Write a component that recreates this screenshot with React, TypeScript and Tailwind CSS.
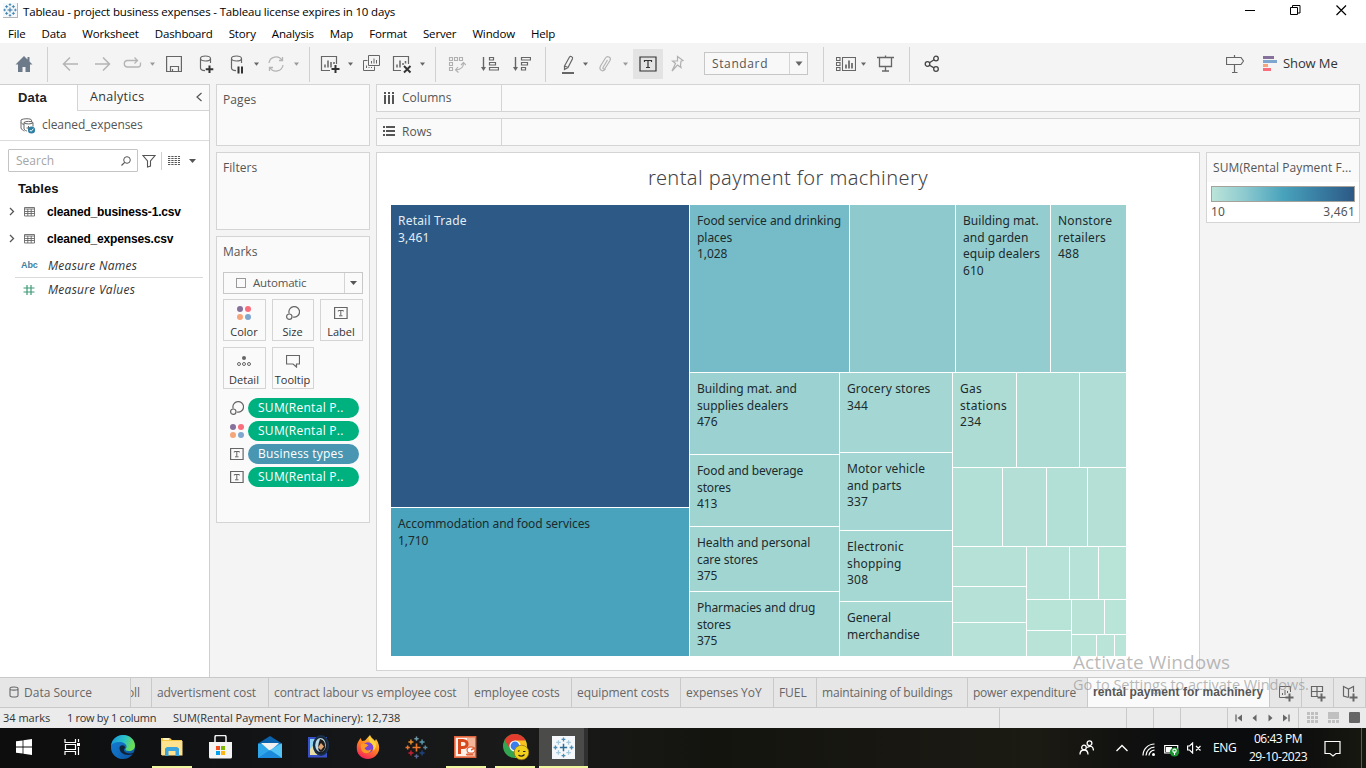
import React from "react";

type IconProps = { w: number; h?: number; className?: string; children: React.ReactNode };

const Icon = ({ w, h = 20, className = "", children }: IconProps) => (
  <svg
    width={w}
    height={h}
    viewBox={`0 0 ${w} ${h}`}
    fill="none"
    stroke="currentColor"
    className={`shrink-0 ${className}`}
  >
    {children}
  </svg>
);

const Caret = ({ className = "" }: { className?: string }) => (
  <Icon w={5} className={className}>
    <path d="M0 8.5h5L2.5 11.8z" fill="currentColor" stroke="none" />
  </Icon>
);

const Sep = ({ className = "" }: { className?: string }) => (
  <div className={`-mt-[7px] h-[35px] w-px shrink-0 bg-[#d0d0d0] ${className}`} />
);

const TableauMark = ({ size, colors }: { size: number; colors: string[] }) => {
  const pts: [number, number, number][] = [
    [12, 2.8, 2.2], [12, 21.2, 2.2], [2.8, 12, 2.2], [21.2, 12, 2.2],
    [6.2, 6.2, 2.6], [17.8, 6.2, 2.6], [6.2, 17.8, 2.6], [17.8, 17.8, 2.6],
  ];
  return (
    <svg width={size} height={size} viewBox="0 0 24 24" fill="none" strokeWidth="1.5" className="shrink-0">
      <path d="M12 7.8v8.4M7.8 12h8.4" stroke={colors[0]} strokeWidth="1.7" />
      {pts.map(([x, y, r], i) => (
        <path key={i} d={`M${x - r} ${y}h${2 * r}M${x} ${y - r}v${2 * r}`} stroke={colors[(i % (colors.length - 1)) + 1]} />
      ))}
    </svg>
  );
};

const menus: [string, string][] = [
  ["File", "ml-2"], ["Data", "ml-4"], ["Worksheet", "ml-4"], ["Dashboard", "ml-4"], ["Story", "ml-4"],
  ["Analysis", "ml-4"], ["Map", "ml-4"], ["Format", "ml-4"], ["Server", "ml-4"], ["Window", "ml-4"], ["Help", "ml-4"],
];

function TitleBar() {
  return (
    <div className="flex h-6 shrink-0 items-start bg-white text-black">
      <div className="ml-[3px] mt-[3px] flex h-[15px] w-[15px] items-center justify-center border-b border-r border-[#b5b5b5] bg-[#f4f8fb]">
        <TableauMark size={14} colors={["#2d6f9e", "#3a80ac"]} />
      </div>
      <div className="ml-[5px] mt-[3px] font-['Open_Sans'] text-[11.5px] leading-[18px] tracking-[-0.165px]">
        Tableau - project business expenses - Tableau license expires in 10 days
      </div>
      <div className="ml-auto flex">
        <Icon w={10} className="mr-[35px]"><path d="M0 10.5h10" /></Icon>
        <Icon w={11} className="mr-[35px]"><path d="M.5 7.5h7v7h-7zM2.5 7V5.500h7.500v7.500H8" /></Icon>
        <Icon w={11} className="mr-[19px]"><path d="M.5 5.500l9.500 9.500M10 5.500L.5 15" strokeWidth="1.2" /></Icon>
      </div>
    </div>
  );
}

function MenuBar() {
  return (
    <div className="flex h-[19px] shrink-0 bg-white font-['Open_Sans'] text-[11.5px] leading-[19px] tracking-[-0.15px] text-black">
      {menus.map(([m, c]) => (
        <span key={m} className={c}>{m}</span>
      ))}
    </div>
  );
}

const Cylinder = () => (
  <path d="M12.500 9V4.500c0-1.400-2-2.500-5-2.500s-5 1.100-5 2.500S4.500 7 7.500 7s5-1.100 5-2.500M2.500 4.500V14c0 1.500 2 2.500 4.500 2.700" strokeWidth="1.200" />
);

function Toolbar() {
  return (
    <div className="flex h-[41px] shrink-0 items-start bg-[#f4f4f4] pt-[11px] text-[#666]">
      <Icon w={18} className="ml-[15px] text-[#6c7a89]">
        <path d="M9 2L.5 10.500H3V18h4.500v-5h3v5H15v-7.500h2.500L14.500 7.500V3h-2v2.500z" fill="currentColor" stroke="none" />
      </Icon>
      <Sep className="ml-[14px]" />
      <Icon w={17} className="ml-[14px] text-[#b4b4b4]"><path d="M16 10H1.500M8 3.500L1.500 10 8 16.500" strokeWidth="1.5" /></Icon>
      <Icon w={17} className="ml-[15px] text-[#b4b4b4]"><path d="M1 10h14.500M9 3.500l6.500 6.500L9 16.500" strokeWidth="1.5" /></Icon>
      <Icon w={19} className="ml-3 text-[#b4b4b4]">
        <path d="M14 6.500H4A3.300 3.300 0 0 0 4 13h11c1.500 0 2.500-1 2.500-2.500V8.500M11.500 3.500l3 3-3 3" strokeWidth="1.3" />
      </Icon>
      <Caret className="ml-2 text-[#9a9a9a]" />
      <Icon w={16} className="ml-[11px]"><path d="M.6 2.500h14.800v15H.6zM4.500 17v-4.500h8V17M6.500 17v-2" strokeWidth="1.2" /></Icon>
      <Icon w={16} className="ml-4"><Cylinder /><path d="M11.500 11.500v7.500M7.700 15.300h7.600" stroke="#333" strokeWidth="2" /></Icon>
      <Icon w={15} className="ml-[15px]"><Cylinder /><path d="M9.500 12.500v7M13 12.500v7" stroke="#333" strokeWidth="2" /></Icon>
      <Caret className="ml-2.5" />
      <Icon w={18} className="ml-2 text-[#b4b4b4]">
        <path d="M2 9a7 7 0 0 1 13-2.500M16 11a7 7 0 0 1-13 2.500M12 6.500h3.500V3M6 13.500H2.500V17" strokeWidth="1.3" />
      </Icon>
      <Caret className="ml-[9px] text-[#9a9a9a]" />
      <Sep className="ml-2.5" />
      <Icon w={20} className="ml-2.5">
        <path d="M10 16.500H1.500v-14h15v7.500" strokeWidth="1.2" /><path d="M5 13.500v-3M8 13.500v-7M11 13.500V8M14 10V8" strokeWidth="1.5" />
        <path d="M15.500 11v8M11.500 15h8" stroke="#333" strokeWidth="2" />
      </Icon>
      <Caret className="ml-2" />
      <Icon w={19} className="ml-[9px]">
        <path d="M6.500 1.500h11v10h-11zM5.500 6.500h-4v10h11v-4M9.500 9.500V7M12 9.500V4.500M14.500 9.500V6M4.500 14v-2.500M7 14v-1M9.500 14v-1" />
      </Icon>
      <Icon w={20} className="ml-[11px]">
        <path d="M9 16.500H1.500v-14h15v7.500" strokeWidth="1.2" /><path d="M5 13.500v-3M8 13.500v-7M11 11V9M13.500 9.500V7" strokeWidth="1.5" />
        <path d="M12 12l6.500 6.500M18.500 12L12 18.500" stroke="#333" strokeWidth="1.900" />
      </Icon>
      <Caret className="ml-2" />
      <Sep className="ml-2.5" />
      <Icon w={18} className="ml-3 text-[#b0b0b0]">
        <path d="M1.500 3.500h3v3h-3zM6.500 3.500h3v3h-3zM11.500 3.500h3v3h-3zM1.500 8.500h3v3h-3zM1.500 13.500h3v3h-3zM15.500 9c0 4-2.500 6.500-7.500 7M13 11l2.500-2.500L18 11M10 13l-2.500 3 3 2.500" strokeWidth="1.100" />
      </Icon>
      <Icon w={18} className="ml-[15px]">
        <path d="M2.500 3v11" strokeWidth="1.400" /><path d="M0 13h5l-2.500 4z" fill="currentColor" stroke="none" />
        <path d="M8.500 3.500h4v2.500h-4zM8.500 8.500h6V11h-6zM8.500 13.500h9V16h-9z" strokeWidth="1.200" />
      </Icon>
      <Icon w={18} className="ml-[14px]">
        <path d="M2.500 3v11" strokeWidth="1.400" /><path d="M0 13h5l-2.500 4z" fill="currentColor" stroke="none" />
        <path d="M8.500 3.500h9V6h-9zM8.500 8.500h6V11h-6zM8.500 13.500h4V16h-4z" strokeWidth="1.200" />
      </Icon>
      <Sep className="ml-[14px]" />
      <Icon w={14} className="ml-[15px]">
        <path d="M3.500 12L8.500 3c1-1.300 3.800 0 3 1.700L7 13.500 3.500 15.500zM3.500 12L7 13.500" strokeWidth="1.200" /><path d="M1 19h12" strokeWidth="2" />
      </Icon>
      <Caret className="ml-2" />
      <Icon w={14} className="ml-2.5 text-[#b4b4b4]">
        <path d="M9.500 6L5 13.500c-.6 1.500 1.300 2.300 2 1L12 6.500c1.600-3.300-2.600-5.300-4.500-2.500L2.500 12c-2 4 2.500 6.500 5 3" strokeWidth="1.200" />
      </Icon>
      <Caret className="ml-[11px] text-[#9a9a9a]" />
      <div className="-mt-[5px] ml-[5px] flex h-[30px] w-[30px] shrink-0 items-center justify-center bg-[#e3e3e3] text-[#333]">
        <Icon w={18}><path d="M1 3h16v14H1z" strokeWidth="1.200" /><path d="M5.500 8V6.500h7V8M9 6.500v7M7 13.500h4" strokeWidth="1.200" /></Icon>
      </div>
      <Icon w={13} className="ml-2 text-[#b0b0b0]">
        <path d="M6.500 2.500l5.500 4-2 .8-.5 4 .5 2.200-3.500-2.500L1 17l3.500-7.500L1.500 7l5-.2z" strokeWidth="1.200" />
      </Icon>
      <div className="-mt-0.5 ml-5 flex h-[23px] w-[104px] shrink-0 border border-[#c6c6c6] bg-[#f8f8f8]">
        <div className="w-[84px] pl-[7px] font-['Open_Sans'] text-[12px] leading-[21px] tracking-[0.62px] text-[#555]">Standard</div>
        <div className="flex flex-1 items-center justify-center border-l border-[#d4d4d4]">
          <svg width="8" height="5"><path d="M.5 .5h7L4 5z" fill="#666" /></svg>
        </div>
      </div>
      <Sep className="ml-[15px]" />
      <Icon w={20} className="ml-3">
        <path d="M.5 3.500h3.500v3H.5zM.5 8.500h3.500v3H.5zM.5 13.500h3.500v3H.5zM6.500 3.500h13v13h-13z" strokeWidth="1.100" />
        <path d="M10 14.500v-4M13 14.500v-8M16 14.500V9" strokeWidth="1.700" />
      </Icon>
      <Caret className="ml-[5px]" />
      <Icon w={17} className="ml-[11px]">
        <path d="M0 3.500h17M2.500 4v8.500h12V4M8.500 12.500v4M5 17h7M8.500 1.500v2" strokeWidth="1.300" />
      </Icon>
      <Sep className="ml-[15px]" />
      <Icon w={16} className="ml-[14px] text-[#444]">
        <circle cx="3.500" cy="10" r="2.300" strokeWidth="1.300" /><circle cx="12" cy="4.500" r="2.300" strokeWidth="1.300" /><circle cx="12" cy="15" r="2.300" strokeWidth="1.300" />
        <path d="M5.500 8.800L10 5.800M5.500 11.200l4.500 2.700" strokeWidth="1.300" />
      </Icon>
      <Icon w={18} className="ml-[286px]">
        <path d="M.5 3.500h14.500l2.500 3.500-2.500 3.500H.5zM8.500 1v2.500M8.500 10.500v8M6 18.500h5.500" strokeWidth="1.200" />
      </Icon>
      <Icon w={14} className="ml-[19px]">
        <g stroke="none">
          <path d="M0 2h11v3H0z" fill="#85719b" /><path d="M0 6h14v3H0z" fill="#7ea6cf" />
          <path d="M0 10h5v3H0z" fill="#f6a57b" /><path d="M0 14h8v3H0z" fill="#fa6e7c" />
        </g>
      </Icon>
      <span className="ml-[6px] whitespace-nowrap font-['Open_Sans'] text-[13px] leading-[19px] tracking-[-0.1px] text-[#333]">Show Me</span>
    </div>
  );
}

const TableIcon = () => (
  <Icon w={11} h={11} className="ml-[9px] text-[#666]">
    <path d="M.5 1.500h10v8.500H.5zM.5 3h10M.5 5.500h10M.5 7.500h10M3.800 3v7M7.200 3v7" strokeWidth=".9" />
  </Icon>
);

function DataPane() {
  return (
    <div className="flex w-[210px] shrink-0 flex-col border-r border-t border-[#cfcfcf] bg-white">
      <div className="flex h-[26px] shrink-0">
        <div className="w-[77px] pl-[18px] font-['Liberation_Sans'] text-[13px] font-bold leading-[25px] tracking-[0.15px] text-[#222]">Data</div>
        <div className="flex flex-1 items-center border-b border-l border-[#d4d4d4] bg-[#fafafa] pl-3 font-['Open_Sans'] text-[12.5px] tracking-[0.33px] text-[#333]">
          Analytics
          <Icon w={6} h={10} className="ml-auto mr-[7px] -mt-0.5 text-[#555]"><path d="M5.500 1L1 5l4.500 4" strokeWidth="1.200" /></Icon>
        </div>
      </div>
      <div className="flex h-[30px] shrink-0 items-center border-b border-[#dcdcdc]">
        <Icon w={17} h={17} className="ml-[19px] text-[#666]">
          <path d="M12.500 5V3.200C12.500 1.300 4 1.300 2 3v8c.5 1.500 2 2.500 3.500 3M2 5.500C3 7 4.500 7.500 5 7.500M5 5.500c1.500-1.500 7.500-1.500 9 0v4M5 5.500v6.500c1 1.500 2 1.800 3 2M5 5.800c2 1.500 7 1.500 9 0M7.500 11H11M9.500 9v4.500" />
          <circle cx="12.500" cy="13" r="3.600" fill="#2e7fa3" stroke="none" /><path d="M10.800 13l1.300 1.300 2.300-2.600" stroke="#fff" />
        </Icon>
        <span className="-mt-px ml-1.5 font-['Open_Sans'] text-[12px] tracking-[-0.05px] text-[#555]">cleaned_expenses</span>
      </div>
      <div className="mt-2 flex h-[23px] shrink-0 items-center">
        <div className="ml-2 flex h-[23px] w-[130px] items-center rounded-[1px] border border-[#c4c4c4] pl-[7px] font-['Open_Sans'] text-[12px] text-[#a5a5a5]">
          <span>Search</span>
          <Icon w={10} h={10} className="ml-auto mr-1.5 text-[#555]"><circle cx="6" cy="4" r="3.300" /><path d="M3.700 6.300L.5 9.500" strokeWidth="1.200" /></Icon>
        </div>
        <Icon w={14} h={14} className="ml-1 text-[#555]"><path d="M1 1.500h12L8.500 7v5l-3 1V7z" strokeWidth="1.100" /></Icon>
        <div className="ml-[5px] h-[18px] w-px bg-[#d0d0d0]" />
        <Icon w={12} h={11} className="ml-1.5 text-[#555]">
          <path d="M0 1.500h12M0 3.500h12M0 5.500h12M0 7.500h12M0 9.500h12" strokeDasharray="2.300 1" />
        </Icon>
        <svg width="7" height="4" className="ml-[9px]"><path d="M0 0h7L3.500 4z" fill="#555" /></svg>
      </div>
      <div className="mt-[7px] h-[19px] shrink-0 pl-[18px] font-['Liberation_Sans'] text-[13px] font-bold leading-[20px] tracking-[0.05px] text-[#111]">Tables</div>
      {["cleaned_business-1.csv", "cleaned_expenses.csv"].map((t) => (
        <div key={t} className="flex h-[27px] shrink-0 items-center pl-[9px] font-['Liberation_Sans'] text-[12px] font-bold tracking-[-0.16px] text-black">
          <Icon w={6} h={9} className="text-[#555]"><path d="M1 1l3.500 3.500L1 8" strokeWidth="1.300" /></Icon>
          <TableIcon />
          <span className="ml-3">{t}</span>
        </div>
      ))}
      <div className="mx-[6px] ml-[15px] flex h-[26px] shrink-0 items-center border-b border-[#dadada]">
        <span className="mt-0.5 w-[33px] pl-[6px] font-['Liberation_Sans'] text-[9px] font-bold tracking-[-0.1px] text-[#3f7f9f]">Abc</span>
        <span className="mt-0.5 font-['Open_Sans'] text-[12px] italic tracking-[0.28px] text-[#333]">Measure Names</span>
      </div>
      <div className="ml-[15px] flex h-[23px] shrink-0 items-center">
        <div className="w-[33px] pl-[8px]"><Icon w={12} h={12} className="text-[#3c9b77]"><path d="M4 1v10M8 1v10M.5 4h11M.5 8h11" strokeWidth="1.200" /></Icon></div>
        <span className="font-['Open_Sans'] text-[12px] italic tracking-[0.28px] text-[#333]">Measure Values</span>
      </div>
    </div>
  );
}

const ColorDots = () => (
  <Icon w={14} h={14}>
    <g stroke="none"><circle cx="3" cy="3" r="3" fill="#85719b" /><circle cx="11" cy="3" r="3" fill="#fa6e7c" />
      <circle cx="3" cy="11" r="3" fill="#f6a57b" /><circle cx="11" cy="11" r="3" fill="#7ea6cf" /></g>
  </Icon>
);
const SizeIcon = () => (
  <Icon w={14} h={14} className="text-[#666]">
    <path d="M3.200 7.500A5.300 5.300 0 1 1 7 11" strokeWidth="1.200" /><circle cx="3.300" cy="10.700" r="2.700" strokeWidth="1.200" />
  </Icon>
);
const LabelIcon = () => (
  <Icon w={14} h={14} className="text-[#666]">
    <path d="M.6 1.500h12.500v11H.6z" strokeWidth="1.200" /><path d="M4.300 5.500V4.500h5v1M6.800 4.500v5M5 9.800h3.500" />
  </Icon>
);
const DetailIcon = () => (
  <Icon w={14} h={14} className="text-[#666]">
    <circle cx="7" cy="4" r="2" fill="currentColor" stroke="none" />
    <circle cx="2" cy="10" r="1.500" /><circle cx="7" cy="10" r="1.500" /><circle cx="12" cy="10" r="1.500" />
  </Icon>
);
const TooltipIcon = () => (
  <Icon w={14} h={14} className="text-[#666]"><path d="M.5 1.500h13v8.500h-3v3l-3.500-3H.5z" strokeWidth="1.200" /></Icon>
);

const MarkButton = ({ icon, label }: { icon: React.ReactNode; label: string }) => (
  <div className="flex flex-col items-center border border-[#d4d4d4] pr-px pt-[6px] font-['Open_Sans'] text-[11px] leading-4 tracking-[0.02px] text-[#333]">
    {icon}
    <span className="mt-1">{label}</span>
  </div>
);

const Pill = ({ icon, label, blue }: { icon: React.ReactNode; label: string; blue?: boolean }) => (
  <div className="mb-[3px] flex h-5 items-center">
    {icon}
    <div className={`ml-1 h-5 w-[111px] rounded-full pl-[10px] font-['Open_Sans'] text-[12px] leading-[19px] text-white ${blue ? "bg-[#4996b2] tracking-[0.2px]" : "bg-[#00b180] tracking-[0.28px]"}`}>{label}</div>
  </div>
);

const shelf = "border border-[#d4d4d4] bg-[#fafafa] font-['Open_Sans'] text-[12px] text-[#555]";

function Cards() {
  return (
    <div className="ml-[6px] flex w-[154px] shrink-0 flex-col">
      <div className={`h-[62px] pl-1.5 pt-[5px] leading-[19px] tracking-[0.1px] ${shelf}`}>Pages</div>
      <div className={`mt-[6px] h-[78px] pl-1.5 pt-[5px] leading-[19px] tracking-[0.05px] ${shelf}`}>Filters</div>
      <div className={`mt-[6px] h-[287px] pl-1.5 pt-[5px] leading-[19px] ${shelf}`}>
        <div>Marks</div>
        <div className="mt-[11px] flex h-[22px] w-[140px] items-center border border-[#c8c8c8] text-[11.5px] leading-5">
          <div className="ml-3 h-[10px] w-[10px] border border-[#999]" />
          <span className="ml-[7px] tracking-[-0.17px]">Automatic</span>
          <div className="ml-auto flex h-full w-[18px] items-center justify-center border-l border-[#d4d4d4]">
            <svg width="7" height="4"><path d="M0 0h7L3.500 4z" fill="#555" /></svg>
          </div>
        </div>
        <div className="mt-[5px] grid grid-cols-[43px_42px_43px] grid-rows-[42px_42px] gap-[6px]">
          <MarkButton icon={<ColorDots />} label="Color" />
          <MarkButton icon={<SizeIcon />} label="Size" />
          <MarkButton icon={<LabelIcon />} label="Label" />
          <MarkButton icon={<DetailIcon />} label="Detail" />
          <MarkButton icon={<TooltipIcon />} label="Tooltip" />
        </div>
        <div className="ml-[7px] mt-[9px]">
          <Pill icon={<SizeIcon />} label="SUM(Rental P.." />
          <Pill icon={<ColorDots />} label="SUM(Rental P.." />
          <Pill icon={<LabelIcon />} label="Business types" blue />
          <Pill icon={<LabelIcon />} label="SUM(Rental P.." />
        </div>
      </div>
    </div>
  );
}

const Cell = ({ c, lines = [], light, t = "tracking-[0.1px]" }: { c: string; lines?: string[]; light?: boolean; t?: string }) => (
  <div className={`overflow-hidden whitespace-nowrap pl-[7px] pt-[8px] font-['Noto_Sans'] text-[12px] leading-[16.6px] ${t} ${light ? "text-[#e3edf5]" : "text-[#1c2b2d]"} ${c}`}>
    {lines.map((l) => <div key={l}>{l}</div>)}
  </div>
);

function Treemap() {
  return (
    <div className="ml-[14px] grid h-[451px] w-[735px] grid-cols-[298px_436px] gap-px">
      <div className="grid grid-rows-[302px_148px] gap-px">
        <Cell c="bg-[#2c5985]" light t="tracking-[0.2px]" lines={["Retail Trade", "3,461"]} />
        <Cell c="bg-[#49a3bc]" t="tracking-[-0.07px]" lines={["Accommodation and food services", "1,710"]} />
      </div>
      <div className="grid grid-rows-[167px_283px] gap-px">
        <div className="grid grid-cols-[159px_105px_94px_75px] gap-px">
          <Cell c="bg-[#76bcc8]" t="tracking-[-0.05px]" lines={["Food service and drinking", "places", "1,028"]} />
          <Cell c="bg-[#8dc9cd]" />
          <Cell c="bg-[#94cdcf]" t="tracking-[0.03px]" lines={["Building mat.", "and garden", "equip dealers", "610"]} />
          <Cell c="bg-[#9ad1d0]" t="tracking-[0.2px]" lines={["Nonstore", "retailers", "488"]} />
        </div>
        <div className="grid grid-cols-[149px_112px_173px] gap-px">
          <div className="grid grid-rows-[81px_71px_64px_64px] gap-px">
            <Cell c="bg-[#9bd1d1]" t="tracking-[0px]" lines={["Building mat. and", "supplies dealers", "476"]} />
            <Cell c="bg-[#9fd4d1]" t="tracking-[-0.12px]" lines={["Food and beverage", "stores", "413"]} />
            <Cell c="bg-[#a1d5d2]" t="tracking-[-0.06px]" lines={["Health and personal", "care stores", "375"]} />
            <Cell c="bg-[#a1d5d2]" t="tracking-[-0.12px]" lines={["Pharmacies and drug", "stores", "375"]} />
          </div>
          <div className="grid grid-rows-[79px_77px_70px_54px] gap-px">
            <Cell c="bg-[#a4d7d3]" lines={["Grocery stores", "344"]} />
            <Cell c="bg-[#a4d7d3]" lines={["Motor vehicle", "and parts", "337"]} />
            <Cell c="bg-[#a6d8d3]" t="tracking-[0.2px]" lines={["Electronic", "shopping", "308"]} />
            <Cell c="bg-[#aadad4]" t="tracking-[-0.03px]" lines={["General", "merchandise"]} />
          </div>
          <div className="grid grid-rows-[94px_78px_109px] gap-px">
            <div className="grid grid-cols-[63px_62px_46px] gap-px">
              <Cell c="bg-[#addcd5]" t="tracking-[0.3px]" lines={["Gas", "stations", "234"]} />
              <Cell c="bg-[#addcd5]" />
              <Cell c="bg-[#b0ddd6]" />
            </div>
            <div className="grid grid-cols-[49px_43px_40px_38px] gap-px">
              <Cell c="bg-[#b2dfd6]" /><Cell c="bg-[#b3dfd6]" /><Cell c="bg-[#b3e0d6]" /><Cell c="bg-[#b4e0d6]" />
            </div>
            <div className="grid grid-cols-[73px_99px] gap-px">
              <div className="grid grid-rows-[39px_35px_33px] gap-px">
                <Cell c="bg-[#b5e1d6]" /><Cell c="bg-[#b5e1d6]" /><Cell c="bg-[#b6e2d7]" />
              </div>
              <div className="grid grid-rows-[52px_56px] gap-px">
                <div className="grid grid-cols-[42px_28px_27px] gap-px">
                  <Cell c="bg-[#b7e2d7]" /><Cell c="bg-[#b7e2d7]" /><Cell c="bg-[#b8e3d7]" />
                </div>
                <div className="grid grid-cols-[44px_54px] gap-px">
                  <div className="grid grid-rows-[30px_25px] gap-px">
                    <Cell c="bg-[#b8e3d7]" /><Cell c="bg-[#b9e3d7]" />
                  </div>
                  <div className="grid grid-rows-[34px_21px] gap-px">
                    <div className="grid grid-cols-[32px_21px] gap-px">
                      <Cell c="bg-[#b9e3d7]" /><Cell c="bg-[#b9e4d8]" />
                    </div>
                    <div className="grid grid-cols-[24px_17px_11px] gap-px">
                      <Cell c="bg-[#bae4d8]" /><Cell c="bg-[#bae4d8]" /><Cell c="bg-[#bae4d8]" />
                    </div>
                  </div>
                </div>
              </div>
            </div>
          </div>
        </div>
      </div>
    </div>
  );
}

function Main() {
  return (
    <div className="ml-[6px] flex w-[984px] shrink-0 flex-col">
      <div className={`flex h-[28px] shrink-0 ${shelf}`}>
        <div className="flex w-[125px] items-center border-r border-[#d4d4d4] pl-[7px]">
          <Icon w={12} h={12} className="text-[#555]"><path d="M1 0v2M1 3v9M5 0v2M5 3v9M9 0v2M9 3v9" strokeWidth="2" /></Icon>
          <span className="ml-1.5">Columns</span>
        </div>
      </div>
      <div className={`mt-[6px] flex h-[28px] shrink-0 ${shelf}`}>
        <div className="flex w-[125px] items-center border-r border-[#d4d4d4] pl-[6px]">
          <Icon w={12} h={12} className="text-[#555]"><path d="M0 1h2M3 1h9M0 5h2M3 5h9M0 9h2M3 9h9" strokeWidth="2" /></Icon>
          <span className="ml-[7px]">Rows</span>
        </div>
      </div>
      <div className="mt-[6px] flex">
        <div className="h-[519px] w-[824px] border border-[#d4d4d4] bg-white">
          <div className="h-[52px] text-center font-['Noto_Sans'] text-[20px] font-light leading-[50px] tracking-[0.4px] text-[#444]">rental payment for machinery</div>
          <Treemap />
        </div>
        <div className="ml-[6px] h-[71px] w-[154px] border border-[#d4d4d4] bg-white font-['Open_Sans'] text-[12px] text-[#555]">
          <div className="h-[29px] whitespace-nowrap bg-[#fafafa] pl-1.5 leading-[29px] tracking-[0.09px]">SUM(Rental Payment F...</div>
          <div className="ml-1 mt-1 h-4 w-[144px] border border-[#a5a29b] bg-[linear-gradient(90deg,#bbe4d9_0%,#8fcbd0_22%,#49a3bc_50%,#3c85a8_70%,#2c5985_100%)]" />
          <div className="flex justify-between pl-1 pr-1 font-['Noto_Sans'] leading-[19px] tracking-[0.2px]"><span>10</span><span>3,461</span></div>
        </div>
      </div>
    </div>
  );
}

const Tab = ({ w, children }: { w: string; children: React.ReactNode }) => (
  <div className={`shrink-0 overflow-hidden whitespace-nowrap border-r border-[#c9c9c9] pl-[5px] ${w}`}>{children}</div>
);

const Plus = () => <path d="M11.500 9.500v8M7.500 13.500h8" strokeWidth="2" />;

function SheetTabs() {
  return (
    <div className="flex h-[31px] shrink-0 border-y border-[#c9c9c9] bg-[#e6e6e6] font-['Open_Sans'] text-[12px] leading-[29px] tracking-[-0.07px] text-[#666]">
      <div className="flex w-[131px] shrink-0 items-center border-r border-[#c9c9c9] pl-[9px]">
        <Icon w={10} h={12} className="-mt-0.5"><path d="M1 2.500v7c0 2 8 2 8 0v-7c0-2-8-2-8 0zM1 3c0 1.500 8 1.500 8 0" strokeWidth="1.100" /></Icon>
        <span className="ml-[5px] tracking-[0px]">Data Source</span>
      </div>
      <div className="flex w-[21px] shrink-0 justify-end overflow-hidden border-r border-[#c9c9c9] pr-[11px]">oll</div>
      <Tab w="w-[117px]">advertisment cost</Tab>
      <Tab w="w-[200px]">contract labour vs employee cost</Tab>
      <Tab w="w-[103px]">employee costs</Tab>
      <Tab w="w-[109px]">equipment costs</Tab>
      <Tab w="w-[93px]">expenses YoY</Tab>
      <Tab w="w-[43px]">FUEL</Tab>
      <Tab w="w-[151px] tracking-[-0.17px]">maintaining of buildings</Tab>
      <Tab w="w-[120px] tracking-[-0.22px]">power expenditure</Tab>
      <div className="w-[182px] shrink-0 whitespace-nowrap border-r border-[#c9c9c9] bg-[#fafafa] pl-[5px] font-['Liberation_Sans'] text-[12px] font-bold leading-[28px] tracking-[0.08px] text-[#555]">rental payment for machinery</div>
      <div className="flex w-8 shrink-0 items-center justify-center border-r border-[#c9c9c9]">
        <Icon w={16} h={18}><path d="M8 13.500H1.500V2.500h11V8M4.500 11V9M7 11V6M9.500 9V7" /><Plus /></Icon>
      </div>
      <div className="flex w-8 shrink-0 items-center justify-center border-r border-[#c9c9c9]">
        <Icon w={16} h={18}><path d="M8 12.500H1.500V2.500h11V8M1.500 7.500h11M7 2.500v10" strokeWidth="1.200" /><Plus /></Icon>
      </div>
      <div className="flex w-8 shrink-0 items-center justify-center border-r border-[#c9c9c9]">
        <Icon w={16} h={18}><path d="M6.500 13.500L1.500 12V2.500l5 2.500 5-2.500V8M6.500 5v8.500" strokeWidth="1.200" /><Plus /></Icon>
      </div>
    </div>
  );
}

function StatusBar() {
  const s = "h-full border-l border-[#c9c9c9] shrink-0";
  return (
    <div className="flex h-5 shrink-0 items-center bg-[#ebebeb] font-['Open_Sans'] text-[11px] tracking-[0px] text-[#333]">
      <span className="w-[64px] shrink-0 pl-[3px]">34 marks</span>
      <span className="w-[109px] shrink-0 whitespace-nowrap pl-[3px] tracking-[-0.3px]">1 row by 1 column</span>
      <span>SUM(Rental Payment For Machinery): 12,738</span>
      <div className={`ml-auto w-[127px] ${s}`} />
      <div className={`w-[27px] ${s}`} />
      <div className={`w-[27px] ${s}`} />
      <div className={`w-[47px] ${s}`} />
      <div className={`flex w-[71px] items-center pb-px pl-[7px] text-[#666] ${s}`}>
        <Icon w={7} h={8}><path d="M1 0.500v7" strokeWidth="1.300" /><path d="M7 .5v7L2.500 4z" fill="currentColor" stroke="none" /></Icon>
        <Icon w={5} h={8} className="ml-[10px]"><path d="M4.500 .5v7L0.500 4z" fill="currentColor" stroke="none" /></Icon>
        <Icon w={5} h={8} className="ml-[11px]"><path d="M.5 .5v7l4-3.500z" fill="currentColor" stroke="none" /></Icon>
        <Icon w={7} h={8} className="ml-[10px]"><path d="M6 .5v7" strokeWidth="1.300" /><path d="M0 .5v7l4.500-3.500z" fill="currentColor" stroke="none" /></Icon>
      </div>
      <div className={`flex w-[68px] items-center pb-px pl-2 ${s}`}>
        <Icon w={11} h={11} className="text-[#c0c0c0]"><path d="M0 1.500h11M0 5.500h11M0 9.500h11" strokeWidth="3" strokeDasharray="3 1" /></Icon>
        <Icon w={11} h={11} className="ml-[10px] text-[#c0c0c0]"><path d="M0 3.500h11" strokeWidth="7" /><path d="M0 9.500h11" strokeWidth="3" strokeDasharray="3 1" /></Icon>
        <div className="ml-[10px] h-[11px] w-[11px] rounded-[1px] bg-[#666]" />
      </div>
    </div>
  );
}

const Slot = ({ children, under }: { children: React.ReactNode; under?: boolean }) => (
  <div className="flex h-full w-[49px] flex-col items-center justify-between">
    <div className="flex flex-1 items-center">{children}</div>
    <div className={`h-0.5 w-10 ${under ? "bg-[#eef6a0]" : ""}`} />
  </div>
);

function Taskbar() {
  return (
    <div className="flex h-10 shrink-0 bg-[linear-gradient(90deg,#0d0d0d_0%,#121416_20%,#1a1a1a_38%,#14140f_52%,#1b1a13_76%,#0b0c0e_86%,#0b0c0e_94%,#17180f_100%)] text-white">
      <Slot>
        <svg width="16" height="16" viewBox="0 0 16 16" fill="#fff" className="mr-px"><path d="M0 2.300L6.600 1.400v6.200H0zM7.400 1.300L16 0v7.600H7.400zM0 8.400h6.600v6.200L0 13.700zM7.400 8.400H16V16l-8.600-1.200z" /></svg>
      </Slot>
      <Slot>
        <Icon w={17} h={16} className="mr-[3px]"><path d="M1 0v3.500h10.500V0M1.500 5.500h10v5h-10zM1 16v-3.500h10.500V16M14.500 0v3M14.500 8v8" strokeWidth="1.200" /><path d="M13 4h3v3h-3z" fill="#fff" stroke="none" /></Icon>
      </Slot>
      <Slot>
        <svg width="24" height="24" viewBox="0 0 24 24">
          <defs>
            <linearGradient id="edgeA" x1="0" y1="0" x2="1" y2=".3"><stop offset="0" stopColor="#1593dd" /><stop offset=".6" stopColor="#2cc3c6" /><stop offset="1" stopColor="#6bdd52" /></linearGradient>
            <linearGradient id="edgeB" x1="0" y1="0" x2="1" y2="1"><stop offset="0" stopColor="#1688dc" /><stop offset="1" stopColor="#0b4f9f" /></linearGradient>
          </defs>
          <circle cx="12" cy="12" r="12" fill="url(#edgeB)" />
          <path d="M0 11C1 4 6 0 12 0c7 0 12 5 12 10.500 0 4-3 5.500-6 5.500-2.500 0-4-1-3.500-2 .8-1 1-1.500 1-2.500C15.500 9 12 7 8.500 7 4.500 7 1 8.500 0 11z" fill="url(#edgeA)" />
          <path d="M8.500 13c0 5 5 8 12.500 6.500.8-.3 1.700-1.500 1.500-2-3 1.500-7 1-8.500-.5-1.800-1.700-1.200-3 .2-4.200C14 9.500 8.500 9.500 8.500 13z" fill="#101722" opacity=".85" />
          <path d="M8.800 9.500C5 12 5 20 12 24 4 24-1 17 .2 10.500 2 7.500 6 7.500 8.800 9.500z" fill="#0f6fc6" opacity=".5" />
        </svg>
      </Slot>
      <Slot under>
        <svg width="22" height="18" viewBox="0 0 22 18"><path d="M0 0h9l2 2h10v15H0z" fill="#f5c642" /><path d="M1 3h20.500v14.500H1z" fill="#fde28f" /><path d="M2 0h6v2H2z" fill="#fff4c4" /><path d="M4 18V10.500L6 9h10l2 1.500V18h-3.500v-5h-7v5z" fill="#3aa5dd" /></svg>
      </Slot>
      <Slot>
        <svg width="23" height="24" viewBox="0 0 23 24"><path d="M6 8V2q0-1.500 1.500-1.500h8Q17 .5 17 2v6" fill="none" stroke="#f4f4f4" strokeWidth="1.500" /><path d="M0 7h23v15q0 1.500-1.500 1.500h-20Q0 23.500 0 22z" fill="#f4f4f4" /><path d="M7 11h4v4H7z" fill="#ef4f21" /><path d="M12 11h4v4h-4z" fill="#7eb900" /><path d="M7 16h4v4H7z" fill="#00a2ed" /><path d="M12 16h4v4h-4z" fill="#fdb813" /></svg>
      </Slot>
      <Slot>
        <svg width="24" height="22" viewBox="0 0 24 22"><path d="M0 7.500L12 0l12 7.500z" fill="#0b62ad" /><path d="M0 7.500h24V22H0z" fill="#2fa5ea" /><path d="M3 7h18l-9 8z" fill="#f1f1f1" /><path d="M24 7.500V22L12 14z" fill="#54c4f5" /><path d="M0 22h24L12 14z" fill="#1c8ada" /></svg>
      </Slot>
      <Slot>
        <svg width="23" height="24" viewBox="0 0 23 24"><path d="M1 2h19v20.500H1z" fill="#3a50c8" /><path d="M3 4h14v15H3z" fill="#8ed3ef" /><path d="M3 14l4-4 5 10H3z" fill="#e8dfa8" /><ellipse cx="14" cy="10.500" rx="7.300" ry="9.500" fill="#1b2028" stroke="#16304e" strokeWidth="1.800" /><ellipse cx="13.500" cy="10" rx="5.300" ry="7" fill="#b9dbe8" /><path d="M13 4q6 1 5 9-3 6-6 3-2-4 1-12z" fill="#201c1c" /><path d="M14 8l3 3.500-3 3.500-3-2.500z" fill="#e0a574" /></svg>
      </Slot>
      <Slot>
        <svg width="24" height="24" viewBox="0 0 24 24">
          <defs><linearGradient id="ff" x1=".8" y1="0" x2=".3" y2="1"><stop offset="0" stopColor="#ffe14a" /><stop offset=".45" stopColor="#ff8a1e" /><stop offset="1" stopColor="#f5205c" /></linearGradient></defs>
          <path d="M2 7L4.500 3 6 6l3-.5L14 0c1 3 4 4 5 6l1-2c3 4 3.500 8 3 11-1 5-6 9-11 9C5 24 .5 18.500.8 13 .8 10.500 1 9 2 7z" fill="url(#ff)" />
          <circle cx="12" cy="12.500" r="5.200" fill="#7b45d8" /><path d="M5 9c3-1 6 0 7.500 1.500-2 .2-2 2-4 2.500 1 3 5 3 7 1-1 5-8 6-10 1-.8-2-.8-4-.5-6z" fill="#ff9b24" />
          <path d="M14 1c-2 3-1 5 1 7 3 2 3 5 2 8 4-3 4-8 1-10-2-2-4-3-4-5z" fill="#ffd43f" />
        </svg>
      </Slot>
      <Slot><TableauMark size={23} colors={["#e8762d", "#7099a5", "#5b6591", "#e8762d", "#59879b", "#eb912c", "#5c9ab0", "#c72037", "#1f447e"]} /></Slot>
      <Slot under>
        <svg width="23" height="22" viewBox="0 0 23 22"><path d="M.7.7h21v20.500h-21z" fill="#f4b497" stroke="#e2643e" strokeWidth="1.400" /><path d="M2 2h11v18H2z" fill="#fff2ea" /><path d="M5.500 18V4.500H9c5.500 0 5.500 7 0 7H6.500" fill="none" stroke="#d9481c" strokeWidth="3" /><ellipse cx="17" cy="14" rx="4" ry="3.200" fill="#fff" stroke="#e2633a" strokeWidth="1.200" /><path d="M17 14l4-2M12 18.500h7" stroke="#e2633a" strokeWidth="1.400" /></svg>
      </Slot>
      <Slot under>
        <svg width="26" height="27" viewBox="0 0 26 27" className="ml-0.5"><circle cx="12" cy="12" r="12" fill="#35a451" /><path d="M12 12L1.600 6A12 12 0 0 1 22.400 6z" fill="#e33c2e" /><path d="M12 6.500h10.600A12 12 0 0 1 12 24l5-9z" fill="#fcc31e" /><path d="M1.600 6L7 15l4-9z" fill="#e33c2e" /><circle cx="12" cy="12" r="5.600" fill="#fff" /><circle cx="12" cy="12" r="4.400" fill="#3b7ded" /><circle cx="18.500" cy="18.500" r="7.300" fill="#f0d21c" stroke="#8f6a12" strokeWidth=".7" /><path d="M15 17.500l1.500-1M20 17.500h2.500M15.500 21q3 2.500 6-.5" stroke="#322" fill="none" strokeWidth="1.200" /></svg>
      </Slot>
      <div className="flex h-full w-[49px] flex-col justify-between border-r-4 border-[#303030] bg-[#4b4b49]">
        <div className="flex flex-1 items-center justify-center"><div className="ml-[3px] flex h-[23px] w-[23px] items-center justify-center bg-[#f5f8fa]"><TableauMark size={21} colors={["#2c6d95", "#4b8db4", "#4b8db4", "#4b8db4", "#4b8db4", "#a4c8dc", "#a4c8dc", "#a4c8dc", "#a4c8dc"]} /></div></div>
        <div className="h-0.5 w-[49px] shrink-0 bg-[#eef6a0]" />
      </div>
      <div className="ml-auto flex h-full items-center">
        <Icon w={15} h={16}><circle cx="5" cy="7.500" r="2.300" strokeWidth="1.300" /><path d="M1 14.500q0-4.500 4-4.500t4 4.500" strokeWidth="1.300" /><circle cx="10.500" cy="3.200" r="2.400" strokeWidth="1.300" /><path d="M8 7.500q6-3.500 6.500 3" strokeWidth="1.300" /></Icon>
        <Icon w={12} h={8} className="ml-[22px]"><path d="M.5 7L6 1.500 11.500 7" strokeWidth="1.400" /></Icon>
        <Icon w={13} h={13} className="ml-[14px] mt-0.5"><path d="M1 12.500A11.500 11.500 0 0 1 12.500 1M4 12.500A8.500 8.500 0 0 1 12.500 4.200M7 12.500A5.500 5.500 0 0 1 12.500 7.200" strokeWidth="1.200" /><circle cx="11.500" cy="11.500" r="1.500" fill="#fff" stroke="none" /></Icon>
        <Icon w={16} h={14} className="ml-[9px] mt-1"><path d="M.7 2.500h13v7.500H.7z" strokeWidth="1.200" /><path d="M2 4h6v5H2z" fill="#fff" stroke="none" /><circle cx="10.500" cy="9" r="4.600" fill="#17942d" stroke="none" /><path d="M10.500 12V8.500" strokeWidth="1.100" /><circle cx="10.500" cy="7.800" r="1.700" strokeWidth="1.100" /></Icon>
        <Icon w={15} h={12} className="ml-[7px]"><path d="M.6 4v4h2l3 3V1l-3 3zM9 4l4.500 4.500M13.500 4L9 8.500" strokeWidth="1.200" /></Icon>
        <span className="ml-[11px] w-6 whitespace-nowrap font-['Open_Sans'] text-[12px] tracking-[-0.4px]">ENG</span>
        <div className="ml-2 w-[66px] whitespace-nowrap text-center font-['Open_Sans'] text-[12px] leading-[18px] tracking-[-0.45px]">
          <div>06:43 PM</div>
          <div>29-10-2023</div>
        </div>
        <Icon w={17} h={17} className="ml-[13px]"><path d="M1 1.500h15v12h-4l-3 2.500-3-2.500H1z" strokeWidth="1.200" /></Icon>
        <div className="ml-5 mr-1 h-10 w-px bg-[#5c5c55]" />
      </div>
    </div>
  );
}

export default function App() {
  return (
    <div className="relative flex h-[768px] w-[1366px] flex-col overflow-hidden bg-[#f4f4f4]">
      <TitleBar />
      <MenuBar />
      <Toolbar />
      <div className="flex h-[593px] shrink-0">
        <DataPane />
        <Cards />
        <Main />
      </div>
      <SheetTabs />
      <StatusBar />
      <Taskbar />
      <div className="pointer-events-none absolute left-[1073px] top-[650px] whitespace-nowrap font-['Open_Sans'] text-[#8b8b8b]/60">
        <div className="text-[19px] leading-6 tracking-[0.08px]">Activate Windows</div>
        <div className="text-[14.5px] leading-[22px] tracking-[-0.05px]">Go to Settings to activate Windows.</div>
      </div>
    </div>
  );
}
